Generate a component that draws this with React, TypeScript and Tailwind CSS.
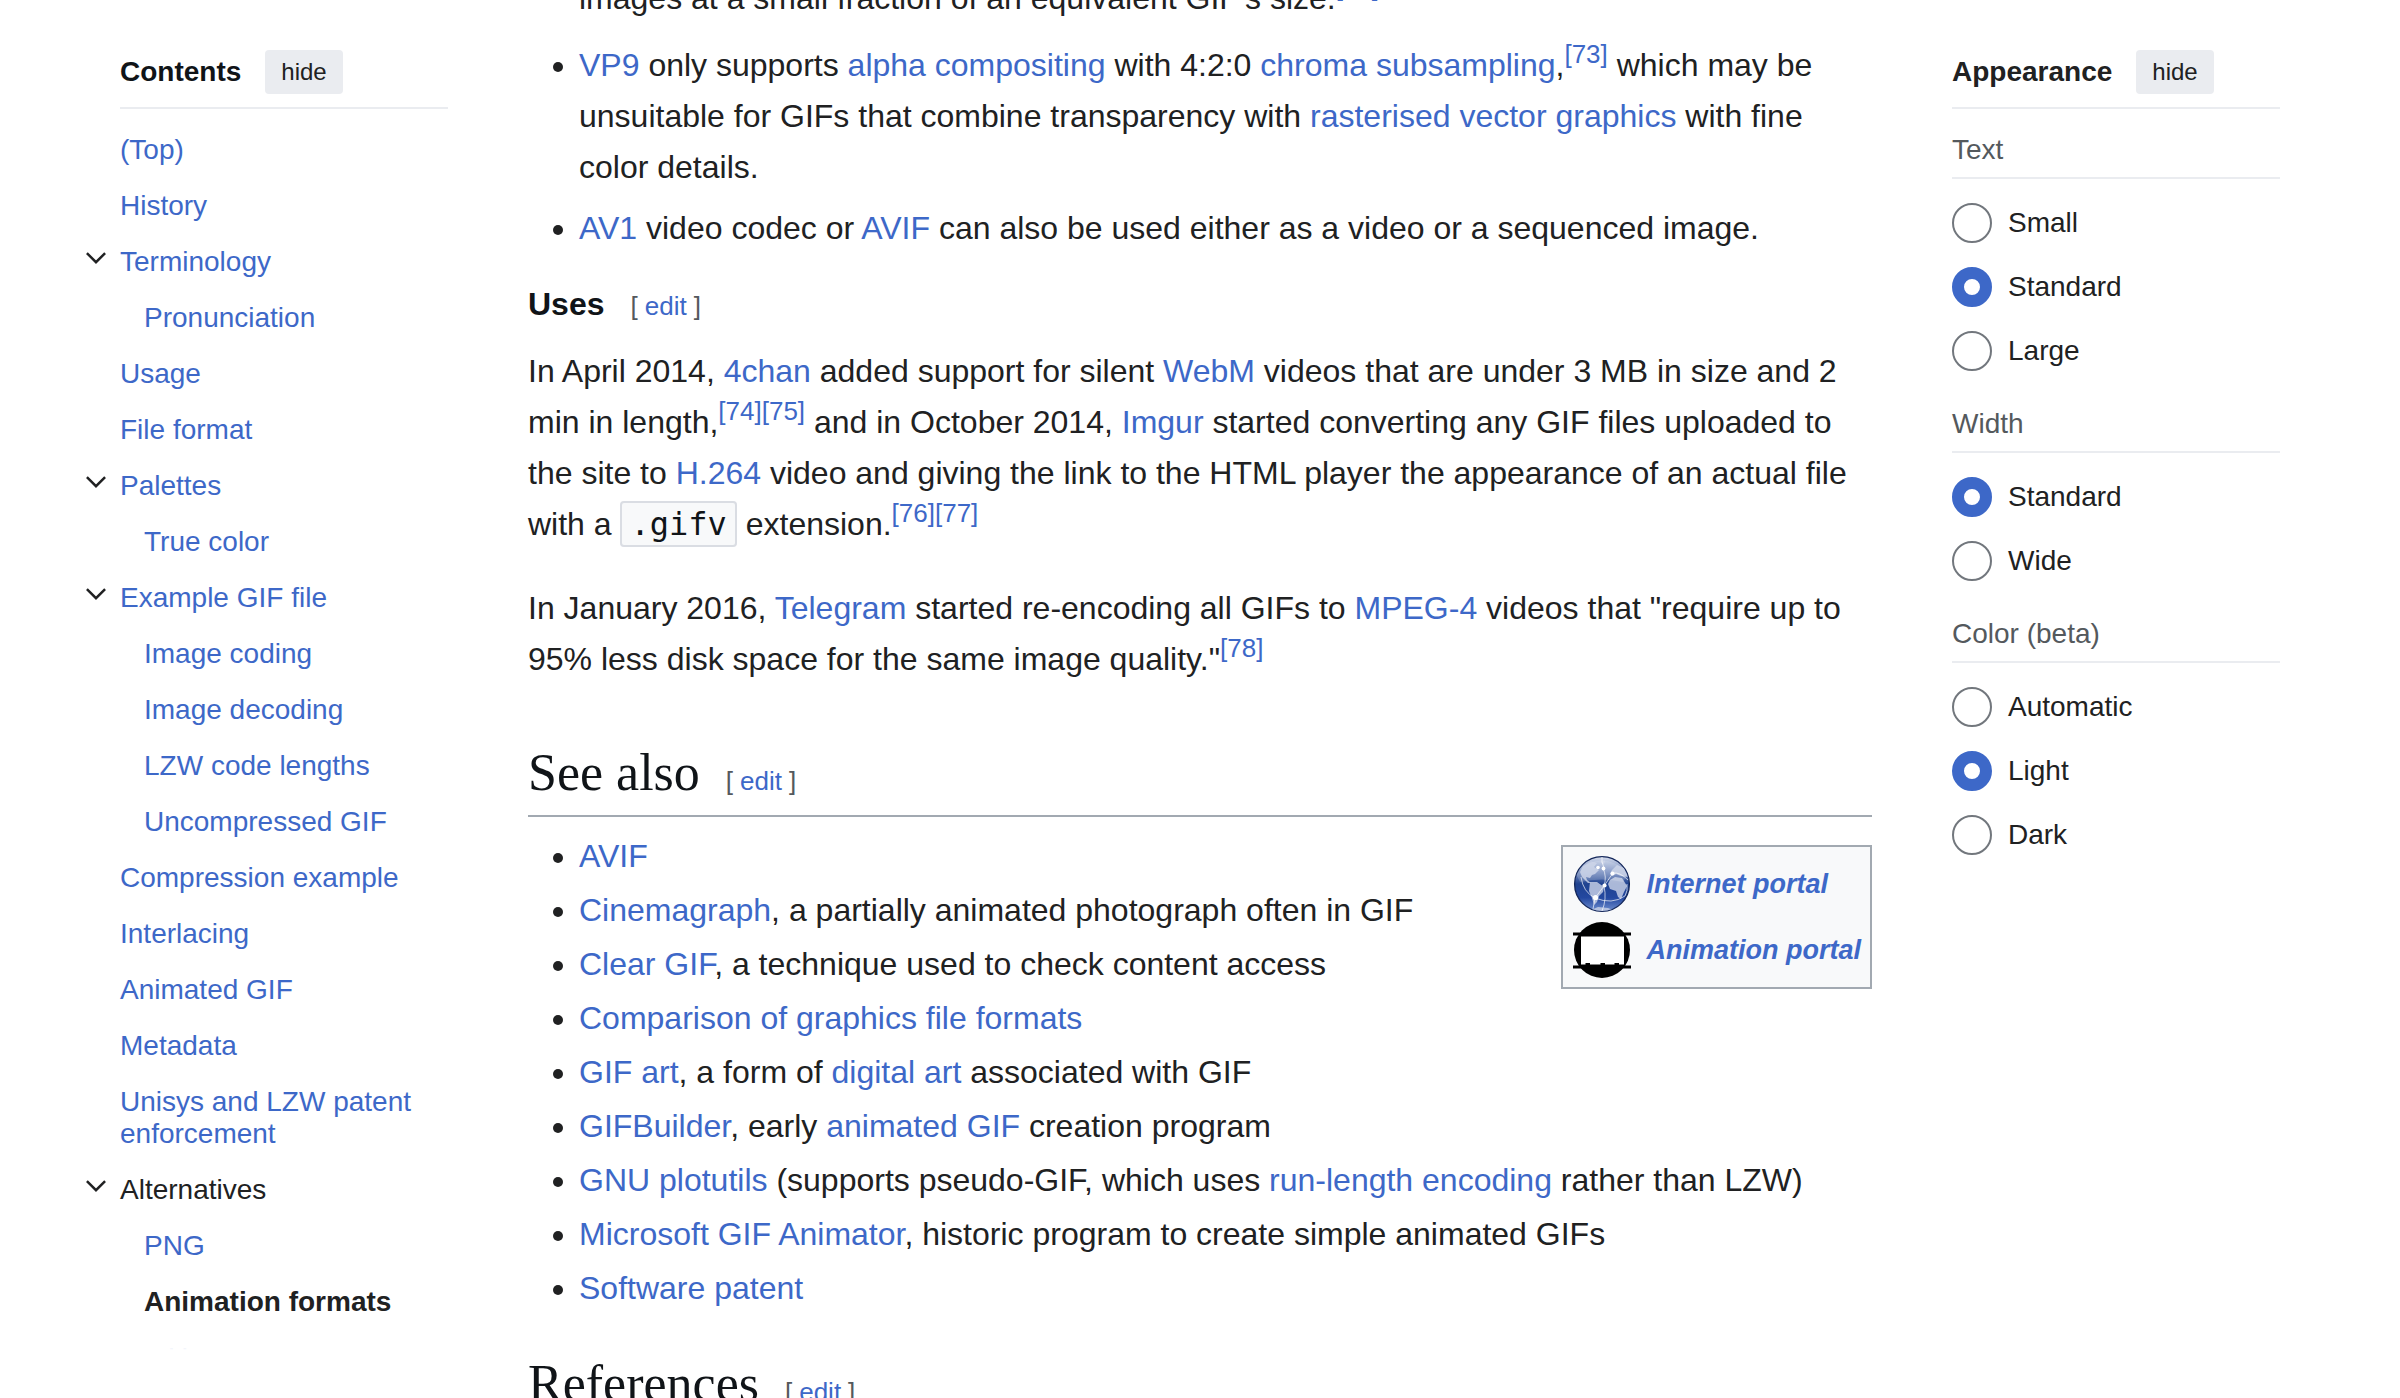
import React from "react";

function A({ children }: { children: React.ReactNode }) {
  return (
    <a href="#" className="text-[#3d68c8] hover:underline">
      {children}
    </a>
  );
}

function Ref({ children }: { children: React.ReactNode }) {
  return (
    <sup className="text-[26px]">
      <A>{children}</A>
    </sup>
  );
}

function Edit() {
  return (
    <span className="ml-[26px] font-['Liberation_Sans',Arial,sans-serif] text-[26px] leading-none font-normal text-[#54595d]">
      [<span className="px-[7px]"><A>edit</A></span>]
    </span>
  );
}

function SectionHeading({ children }: { children: React.ReactNode }) {
  return (
    <h2 className="border-b-2 border-[#a2a9b1] pb-2 font-['Liberation_Serif',Georgia,serif] text-[52px] leading-[68px] text-[#101418]">
      {children}
      <Edit />
    </h2>
  );
}

function PanelHeader({ title, tone }: { title: string; tone: string }) {
  return (
    <div className="flex items-center gap-6 border-b-2 border-[#eaecf0] pb-[13px]">
      <h2 className={"text-[28px] leading-8 font-bold " + tone}>{title}</h2>
      <button type="button" className="h-11 rounded-[4px] bg-[#eaecf0] px-4 text-[24px] leading-[42px] text-[#202122]">
        hide
      </button>
    </div>
  );
}

type TocEntry = { label: string; depth: 0 | 1 | 2; open?: boolean; state?: "parent" | "current" };

const toc: TocEntry[] = [
  { label: "(Top)", depth: 0 },
  { label: "History", depth: 0 },
  { label: "Terminology", depth: 0, open: true },
  { label: "Pronunciation", depth: 1 },
  { label: "Usage", depth: 0 },
  { label: "File format", depth: 0 },
  { label: "Palettes", depth: 0, open: true },
  { label: "True color", depth: 1 },
  { label: "Example GIF file", depth: 0, open: true },
  { label: "Image coding", depth: 1 },
  { label: "Image decoding", depth: 1 },
  { label: "LZW code lengths", depth: 1 },
  { label: "Uncompressed GIF", depth: 1 },
  { label: "Compression example", depth: 0 },
  { label: "Interlacing", depth: 0 },
  { label: "Animated GIF", depth: 0 },
  { label: "Metadata", depth: 0 },
  { label: "Unisys and LZW patent enforcement", depth: 0 },
  { label: "Alternatives", depth: 0, open: true, state: "parent" },
  { label: "PNG", depth: 1 },
  { label: "Animation formats", depth: 1, state: "current" },
  { label: "Uses", depth: 2 },
];

const indent = ["", "pl-6", "pl-12"];

function Contents() {
  return (
    <nav aria-label="Contents" className="flex h-screen flex-col pt-[50px] pb-12">
      <PanelHeader title="Contents" tone="text-[#101418]" />
      <div className="relative -ml-9 min-h-0 flex-1 overflow-hidden pl-9">
        <ul className="flex flex-col gap-6 pt-[25px]">
          {toc.map((t) => (
            <li key={t.label} className={"relative text-[28px] leading-8 " + indent[t.depth]}>
              {t.open && (
                <button type="button" aria-label={"Toggle " + t.label + " subsection"} className="absolute top-0 -left-9 size-6">
                  <svg viewBox="0 0 24 24" className="size-6" fill="none" stroke="#202122" strokeWidth="2.5">
                    <path d="M2.9 7.2L12 16.2L21.1 7.2" />
                  </svg>
                </button>
              )}
              <a
                href="#"
                className={
                  t.state === "current"
                    ? "font-bold text-[#202122]"
                    : t.state === "parent"
                      ? "text-[#202122]"
                      : "text-[#3d68c8]"
                }
              >
                {t.label}
              </a>
            </li>
          ))}
        </ul>
        <div className="pointer-events-none absolute inset-x-0 bottom-0 h-6 bg-linear-to-b from-transparent to-white" />
      </div>
    </nav>
  );
}

function RadioGroup({ title, options, selected }: { title: string; options: string[]; selected: string }) {
  return (
    <fieldset>
      <legend className="w-full border-b-2 border-[#eaecf0] pb-[11px] text-[28px] leading-8 text-[#54595d]">{title}</legend>
      <div className="flex flex-col gap-6 pt-6">
        {options.map((o) => (
          <label key={o} className="flex items-center gap-4 text-[28px] leading-8 text-[#202122]">
            <input
              type="radio"
              name={title}
              defaultChecked={o === selected}
              className="size-10 shrink-0 appearance-none rounded-full border-2 border-[#72777d] bg-white checked:border-[12px] checked:border-[#3d68c8]"
            />
            {o}
          </label>
        ))}
      </div>
    </fieldset>
  );
}

function Appearance() {
  return (
    <aside className="pt-[50px]">
      <PanelHeader title="Appearance" tone="text-[#202122]" />
      <div className="flex flex-col gap-[37px] pt-[25px]">
        <RadioGroup title="Text" options={["Small", "Standard", "Large"]} selected="Standard" />
        <RadioGroup title="Width" options={["Standard", "Wide"]} selected="Standard" />
        <RadioGroup title="Color (beta)" options={["Automatic", "Light", "Dark"]} selected="Light" />
      </div>
    </aside>
  );
}

function GlobeIcon() {
  return (
    <svg viewBox="0 0 58 58" className="size-[58px]" aria-hidden="true">
      <defs>
        <linearGradient id="sea" x1="0" y1="0" x2="0" y2="1">
          <stop offset="0" stopColor="#d5dcec" />
          <stop offset="0.25" stopColor="#7d93c4" />
          <stop offset="0.5" stopColor="#1f4290" />
          <stop offset="0.75" stopColor="#2448a0" />
          <stop offset="1" stopColor="#6f8fd0" />
        </linearGradient>
        <clipPath id="disc">
          <circle cx="29" cy="29" r="27" />
        </clipPath>
      </defs>
      <circle cx="29" cy="29" r="27.4" fill="url(#sea)" stroke="#14275a" strokeWidth="1.3" />
      <g clipPath="url(#disc)">
        <g fill="#c3cde4" fillOpacity="0.85">
          <path d="M7 17L10 11L18 6L24 8L21 12L26 15L22 19L19 20L17 23L13 22L14 25L18 28L15 28L9 22Z" />
          <path d="M17 27L24 27L31 32L30 37L26 41L24 47L21 50L19 43L16 36Z" />
          <path d="M37 25L42 22L49 23L54 31L51 37L48 44L45 42L43 36L37 34L35 29Z" />
          <path d="M37 19L39 15L44 10L51 13L55 22L48 21L43 19L39 21Z" />
          <path d="M27 4L33 4L31 9L28 8Z" />
          <path d="M18 55L25 52L35 53L40 55L29 58Z" />
        </g>
        <path d="M2 17Q28 -6 56 17L50 27Q29 22 7 27Z" fill="#fff" fillOpacity="0.18" />
        <g fill="none" stroke="#fff" strokeOpacity="0.75" strokeWidth="0.9">
          <path d="M30 13Q34 22 31 31L22 43Q10 37 8 22" />
          <path d="M31 31L40 18Q47 17 55 25" />
          <path d="M31 31Q34 44 29 56" />
          <path d="M22 43Q39 50 52 41Q55 36 54 29" />
          <path d="M31 13Q28 6 29 2" />
          <path d="M22 43L20 54" />
        </g>
      </g>
      <g fill="#fff">
        <circle cx="25" cy="12.5" r="1.8" />
        <circle cx="30.500" cy="13.5" r="1.9" />
        <circle cx="39.500" cy="18.5" r="2" />
        <circle cx="31.500" cy="30.500" r="2.1" />
        <circle cx="22.500" cy="42.500" r="2.6" />
      </g>
    </svg>
  );
}

function AnimationIcon() {
  return (
    <svg viewBox="0 0 58 58" className="size-[58px]" aria-hidden="true">
      <circle cx="29" cy="29" r="28" fill="#000" />
      <path d="M0 11.500H58V14.500H0ZM0 44.500H58V47.500H0Z" fill="#000" />
      <path d="M8 15.500H51V43.500H46V42H41.500V43.500H32V42H27.500V43.500H17V42H12.500V43.500H8Z" fill="#fff" />
    </svg>
  );
}

function Portals() {
  return (
    <ul
      aria-label="Portals"
      className="float-right mt-7 ml-8 border-2 border-[#a2a9b1] bg-[#f8f9fa] py-1 pr-[9px] pl-[10px] text-[27px] leading-8 font-bold italic"
    >
      <li className="flex h-[66px] items-center gap-4">
        <GlobeIcon />
        <A>Internet portal</A>
      </li>
      <li className="flex h-[66px] items-center gap-4">
        <AnimationIcon />
        <A>Animation portal</A>
      </li>
    </ul>
  );
}

function Article() {
  return (
    <main className="-mt-[27px] text-[32px] leading-[51px] text-[#202122]">
      <ul className="list-disc pl-[51px]">
        <li className="mb-4 list-none">
          images at a small fraction of an equivalent GIF's size.<Ref>[72]</Ref>
        </li>
        <li className="mb-[10px]">
          <A>VP9</A> only supports <A>alpha compositing</A> with 4:2:0 <A>chroma subsampling</A>,<Ref>[73]</Ref> which may be
          unsuitable for GIFs that combine transparency with <A>rasterised vector graphics</A> with fine color details.
        </li>
        <li>
          <A>AV1</A> video codec or <A>AVIF</A> can also be used either as a video or a sequenced image.
        </li>
      </ul>

      <h3 className="mt-[25px] font-bold text-[#101418]">
        Uses
        <Edit />
      </h3>
      <p className="mt-4">
        In April 2014, <A>4chan</A> added support for silent <A>WebM</A> videos that are under 3 MB in size and 2 min in
        length,<Ref>[74]</Ref><Ref>[75]</Ref> and in October 2014, <A>Imgur</A> started converting any GIF files uploaded to the
        site to <A>H.264</A> video and giving the link to the HTML player the appearance of an actual file with a{" "}
        <code className="rounded-[4px] border-2 border-[#dadde3] bg-[#f8f9fa] px-2 py-[2px] font-['DejaVu_Sans_Mono',monospace] text-[32px] leading-none text-[#101418]">
          .gifv
        </code>{" "}
        extension.<Ref>[76]</Ref><Ref>[77]</Ref>
      </p>
      <p className="mt-[33px] mb-[54px]">
        In January 2016, <A>Telegram</A> started re-encoding all GIFs to <A>MPEG-4</A> videos that "require up to 95% less disk
        space for the same image quality."<Ref>[78]</Ref>
      </p>

      <SectionHeading>See also</SectionHeading>
      <Portals />
      <ul className="mb-9 list-disc space-y-[3px] pt-[14px] pl-[51px]">
        <li><A>AVIF</A></li>
        <li><A>Cinemagraph</A>, a partially animated photograph often in GIF</li>
        <li><A>Clear GIF</A>, a technique used to check content access</li>
        <li><A>Comparison of graphics file formats</A></li>
        <li><A>GIF art</A>, a form of <A>digital art</A> associated with GIF</li>
        <li><A>GIFBuilder</A>, early <A>animated GIF</A> creation program</li>
        <li><A>GNU plotutils</A> (supports pseudo-GIF, which uses <A>run-length encoding</A> rather than LZW)</li>
        <li><A>Microsoft GIF Animator</A>, historic program to create simple animated GIFs</li>
        <li><A>Software patent</A></li>
      </ul>

      <SectionHeading>References</SectionHeading>
    </main>
  );
}

export default function App() {
  return (
    <div className="grid h-screen grid-cols-[328px_minmax(0,1fr)_328px] items-start gap-20 overflow-hidden bg-white px-[120px] font-['Liberation_Sans',Arial,sans-serif]">
      <Contents />
      <Article />
      <Appearance />
    </div>
  );
}
